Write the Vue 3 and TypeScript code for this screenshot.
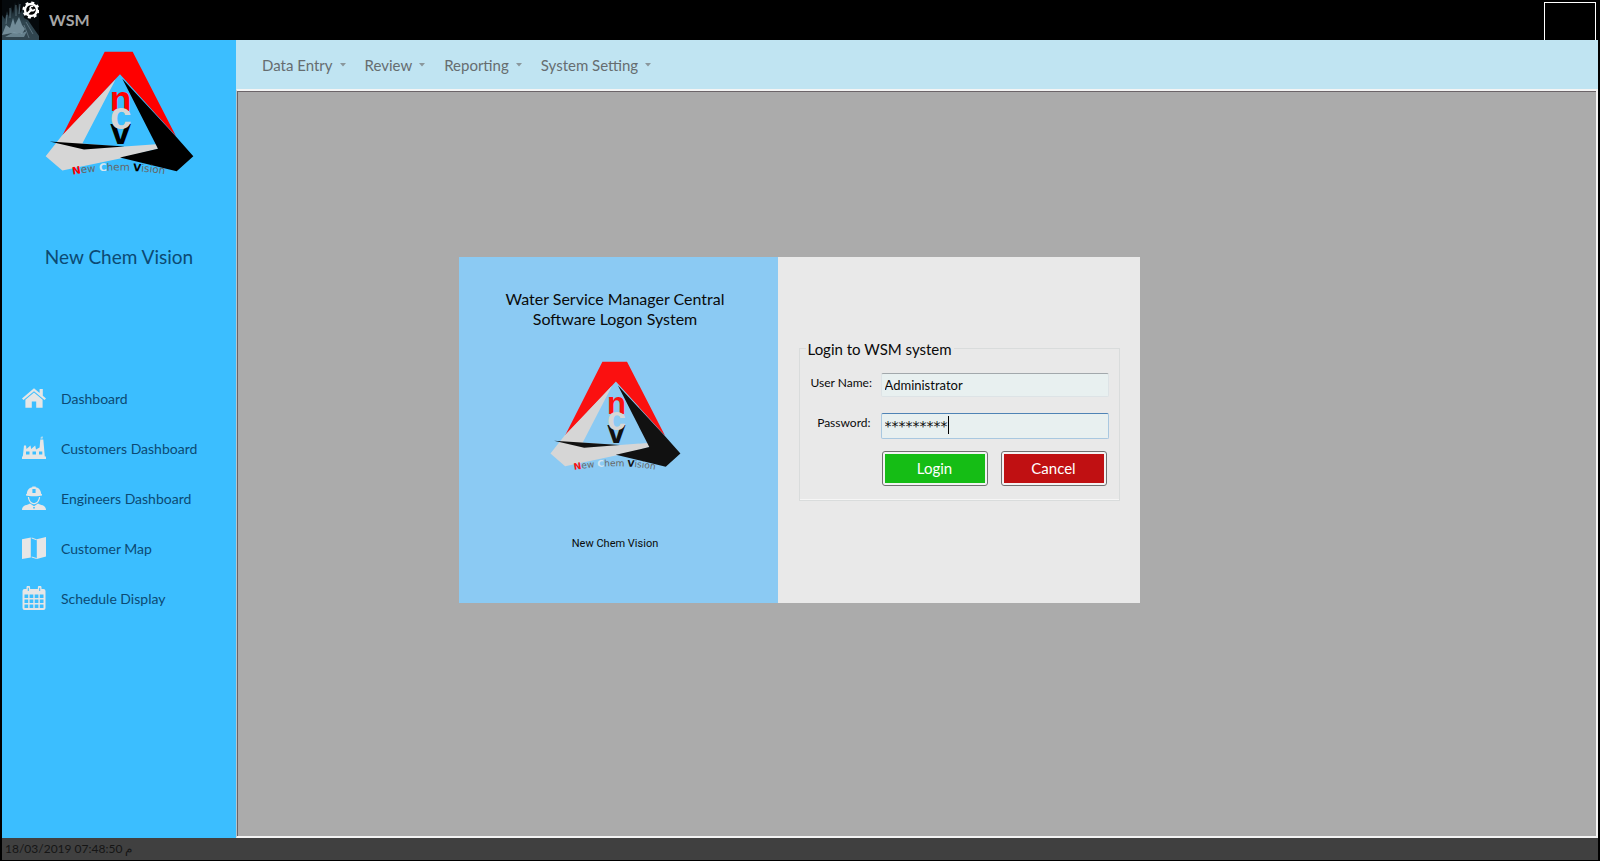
<script setup lang="ts">
import { defineComponent, h, ref } from 'vue'

const menus: string[] = ['Data Entry', 'Review', 'Reporting', 'System Setting']

interface NavItem {
  label: string
  icon: string
}

const nav: NavItem[] = [
  {
    label: 'Dashboard',
    icon: 'M12 2.2 L0 12.4 L1.5 14 L12 5.2 L22.500 14 L24 12.400 L20.800 9.700 V3 H17.600 V7 Z M12 6.600 L3.400 13.800 V21.800 H9.800 V15.500 H14.200 V21.800 H20.600 V13.800 Z'
  },
  {
    label: 'Customers Dashboard',
    icon: 'M0 23 V20.500 H0.800 L2 9.500 H4 L4.500 13 L8.500 9.500 L9.200 13 L13.200 9.500 L14 13.500 L17.600 11.500 L18.300 3.500 H21.300 L22.800 20.500 H24 V23 Z M4 15.500 V18.500 H7.500 V15.500 Z M10.500 15.500 V18.500 H14 V15.500 Z M17 15.500 V18.500 H20.300 V15.500 Z M18.600 2.500 V1.500 H19.600 V0.500 H20.600 V2.500 Z'
  },
  {
    label: 'Engineers Dashboard',
    icon: 'M4.800 8 C5 3.500 8 1.400 10.300 1.200 V0.400 H13.700 V1.200 C16 1.400 19 3.500 19.200 8 L20 8.300 V9.600 C17.500 10.600 6.500 10.600 4 9.600 V8.300 Z M10.400 3 V7 H13.600 V3 Z M5.800 11 C6.500 16 9.200 18.300 12 18.300 C14.800 18.300 17.500 16 18.200 11 L17 11 C16.500 14.800 14.500 17 12 17 C9.500 17 7.500 14.800 7 11 Z M8 17.500 L12 20.300 L16 17.500 C18 19.200 24 18.600 24 24 H0 C0 18.600 6 19.200 8 17.500 Z M11.200 21 V22.600 H12.800 V21 Z'
  },
  {
    label: 'Customer Map',
    icon: 'M0 3.200 L8.800 1.500 V21.500 L0 23 Z M9.600 1.500 L14.600 3.200 V4.200 L9.600 2.500 Z M9.600 20.500 L14.600 22 V23 L9.600 21.600 Z M14.800 3.200 L24 1 V20.500 L14.800 23 Z'
  },
  {
    label: 'Schedule Display',
    icon: 'M2.500 3 H4.500 V1.500 A1.800 1.800 0 0 1 8.100 1.500 V3 H15.900 V1.500 A1.800 1.800 0 0 1 19.500 1.500 V3 H21.500 A2 2 0 0 1 23.500 5 V22 A2 2 0 0 1 21.500 24 H2.500 A2 2 0 0 1 0.500 22 V5 A2 2 0 0 1 2.500 3 Z M2.500 8.500 V12 H6.200 V8.500 Z M7.600 8.500 V12 H11.300 V8.500 Z M12.700 8.500 V12 H16.400 V8.500 Z M17.800 8.500 V12 H21.500 V8.500 Z M2.500 13.400 V17 H6.200 V13.400 Z M7.600 13.400 V17 H11.300 V13.400 Z M12.700 13.400 V17 H16.400 V13.400 Z M17.800 13.400 V17 H21.500 V13.400 Z M2.500 18.400 V22 H6.200 V18.400 Z M7.600 18.400 V22 H11.300 V18.400 Z M12.700 18.400 V22 H16.400 V18.400 Z M17.800 18.400 V22 H21.500 V18.400 Z M5.800 1.800 V5 H6.800 V1.800 Z M17.200 1.800 V5 H18.200 V1.800 Z'
  }
]

const userName = ref('Administrator')
const password = ref('*********')

/* Company emblem: three folded bars around the stacked n-c-v monogram. */
const Emblem = defineComponent({
  props: { ink: { type: String, default: '#000000' }, red: { type: String, default: '#ff0000' } },
  setup(props) {
    const mono = (ch: string, y: number, size: number, fill: string) =>
      h('text', { x: 360, y, 'font-size': size, fill, 'text-anchor': 'middle', 'font-weight': 700, 'font-family': '"Liberation Sans", Arial, sans-serif' }, ch)
    const part = (t: string, fill: string, weight = 400) => h('tspan', { fill, 'font-weight': weight }, t)
    return () =>
      h('svg', { viewBox: '130 150 450 380', role: 'img', 'aria-label': 'New Chem Vision' }, [
        h('path', { d: 'M312 155 H396 L526 408 L358 222 L184 408 Z', fill: props.red }),
        h('path', { d: 'M345 237 L184 406 L135 468 L185 511 L362 474 L472 446 L467 432 L360 440 L245 430 Z', fill: '#d6d6d6' }),
        h('path', { d: 'M365 236 L525 408 L578 468 L528 513 L358 472 L472 446 Z', fill: props.ink }),
        h('path', { d: 'M147 424 L372 439 L250 448 Z', fill: props.ink }),
        mono('v', 433, 112, props.ink),
        mono('n', 333, 106, props.red),
        mono('c', 388, 116, '#d6d6d6'),
        h('path', { id: 'emblem-arc', d: 'M216 524 Q356 498 506 525', fill: 'none' }),
        h('text', { 'font-size': 31, 'font-family': '"DejaVu Sans", sans-serif' }, [
          h('textPath', { href: '#emblem-arc' }, [
            part('N', props.red, 700), part('ew ', '#666666'),
            part('C', '#d6e6f0', 700), part('hem ', '#666666'),
            part('V', props.ink, 700), part('ision', '#666666')
          ])
        ])
      ])
  }
})
</script>

<template>
  <div class="window">
    <header class="titlebar">
      <svg class="app-icon" viewBox="0 0 37 40" aria-hidden="true">
        <defs>
          <linearGradient id="spray" x1="0" y1="0" x2="0" y2="1">
            <stop offset="0" stop-color="#0c1419" />
            <stop offset="0.550" stop-color="#2f454f" />
            <stop offset="1" stop-color="#31454f" />
          </linearGradient>
        </defs>
        <rect width="37" height="40" fill="#05090c" />
        <path d="M0 40 V15 L3 19 L5 11 L7 17 L9 6 L11 14 L13 2 L15 10 L17 1 L18 13 L21 9 L22 18 L26 20 L30 26 L37 36 V40 Z" fill="url(#spray)" />
        <path d="M0 35 L4 25 L8 28 L11 18 L13 25 L17 17 L20 25 L23 29 L20 34 L10 33 Z" fill="#8fabb8" opacity="0.700" />
        <path d="M3 37 L12 32 L18 34 L25 31 L22 37 Z" fill="#7f9daa" opacity="0.700" />
        <path d="M8 8 V18 M14 5 V16 M18 4 L17 14 M5 15 L4 24 M24 22 L31 34 M22 25 L27 38" stroke="#6b8490" stroke-width="0.700" fill="none" />
        <circle cx="29" cy="10" r="6" fill="#000" stroke="#fff" stroke-width="2.400" />
        <circle cx="29" cy="10" r="7.500" fill="none" stroke="#fff" stroke-width="2.200" stroke-dasharray="3 2.890" />
        <path d="M25.500 13.500 L29.500 9.500" stroke="#fff" stroke-width="2.200" stroke-linecap="round" />
        <path d="M31.300 6.400 A2.300 2.300 0 1 0 32.600 9" stroke="#fff" stroke-width="1.600" fill="none" />
      </svg>
      <h1>WSM</h1>
      <div class="window-box"></div>
    </header>

    <div class="body">
      <aside class="sidebar">
        <Emblem class="side-logo" />
        <h2>New Chem Vision</h2>
        <nav aria-label="Main">
          <a v-for="item in nav" :key="item.label" href="#">
            <svg viewBox="0 0 24 24" aria-hidden="true"><path :d="item.icon" fill-rule="evenodd" /></svg>
            {{ item.label }}
          </a>
        </nav>
      </aside>

      <div class="workspace">
        <nav class="menubar" aria-label="Menu">
          <button v-for="m in menus" :key="m" type="button">
            {{ m }}<svg viewBox="0 0 6 4" aria-hidden="true"><path d="M0 0 H6 L3 3.500 Z" /></svg>
          </button>
        </nav>
        <main class="canvas"></main>
      </div>
    </div>

    <footer class="statusbar">18/03/2019 07:48:50 م</footer>

    <div class="overlay">
      <section class="dialog" role="dialog" aria-label="Login to WSM system">
        <div class="intro">
          <p class="product">Water Service Manager Central<br />Software Logon System</p>
          <Emblem class="dialog-logo" ink="#111111" red="#fb1010" />
          <p class="vendor">New Chem Vision</p>
        </div>
        <form class="login" @submit.prevent>
          <fieldset>
            <legend>Login to WSM system</legend>
            <label for="user">User Name:</label>
            <input id="user" v-model="userName" type="text" />
            <label for="pass">Password:</label>
            <div class="secret">
              <input id="pass" v-model="password" type="text" autocomplete="off" />
              <span class="caret"></span>
            </div>
            <div class="actions">
              <button class="ok" type="submit"><span>Login</span></button>
              <button class="cancel" type="button"><span>Cancel</span></button>
            </div>
          </fieldset>
        </form>
      </section>
    </div>
  </div>
</template>

<style>
body {
  margin: 0;
  background: #000;
}
</style>

<style scoped>
* {
  box-sizing: border-box;
}
.window {
  min-height: 100vh;
  display: flex;
  flex-direction: column;
  padding: 0 2px 1px;
  background: #000;
  font-family: "Comic Sans MS", Lato, sans-serif;
  font-size: 15px;
}
h1, h2, p {
  margin: 0;
  font-weight: 400;
}
.titlebar {
  height: 40px;
  display: flex;
  align-items: center;
  gap: 10px;
}
.app-icon {
  width: 37px;
  height: 40px;
}
h1 {
  font: 700 16px/20px Lato, sans-serif;
  color: #a6a6a6;
}
.window-box {
  width: 52px;
  height: 38px;
  margin-left: auto;
  margin-right: 2px;
  align-self: flex-end;
  border: 1px solid #fff;
  border-bottom: 0;
}
.body {
  flex: 1;
  display: flex;
}
.sidebar {
  width: 234px;
  flex: none;
  display: flex;
  flex-direction: column;
  align-items: center;
  padding-top: 10px;
  background: #3bbeff;
  color: #0c4a73;
}
.side-logo {
  width: 150px;
  height: 127px;
}
h2 {
  margin-top: 68px;
  font-size: 19px;
  line-height: 24px;
}
.sidebar nav {
  align-self: stretch;
  margin-top: 104px;
}
.sidebar a {
  display: flex;
  align-items: center;
  gap: 15px;
  height: 50px;
  padding-left: 20px;
  color: inherit;
  font-size: 14px;
  text-decoration: none;
}
.sidebar a svg {
  width: 24px;
  height: 24px;
  fill: #e6e6e6;
}
.workspace {
  flex: 1;
  display: flex;
  flex-direction: column;
}
.menubar {
  height: 49px;
  display: flex;
  align-items: center;
  gap: 19px;
  padding-left: 26px;
  background: #c0e4f2;
}
.menubar button {
  display: flex;
  align-items: center;
  gap: 7px;
  padding: 0;
  border: 0;
  background: none;
  font: inherit;
  color: #666d70;
}
.menubar svg {
  width: 6px;
  height: 4px;
  fill: #8a979c;
}
.canvas {
  flex: 1;
  border: 2px solid #f4f4f4;
  border-left: 1px solid #b5c4cc;
  background: #ababab;
  box-shadow: inset 1px 1px 0 #6b6468;
}
.statusbar {
  height: 22px;
  padding-left: 3px;
  font-size: 12px;
  line-height: 22px;
  color: #151515;
  background: #404040;
}
.overlay {
  position: fixed;
  inset: 0;
  display: grid;
  place-items: center;
  padding: 0 2px 2px 0;
}
.dialog {
  width: 681px;
  max-width: 100%;
  display: flex;
  background: #e9e9e9;
  color: #0a0a0a;
}
.intro {
  width: 319px;
  display: flex;
  flex-direction: column;
  align-items: center;
  padding: 32px 6px 51px 0;
  background: #8bcaf3;
}
.product {
  font-size: 16px;
  line-height: 20px;
  text-align: center;
}
.dialog-logo {
  width: 132px;
  height: 112px;
  margin-top: 31px;
}
.vendor {
  margin-top: 64px;
  font: 11px/16px Roboto, Tahoma, sans-serif;
}
.login {
  flex: 1;
  padding: 82px 20px 0 21px;
}
fieldset {
  display: grid;
  grid-template-columns: 60px 1fr;
  column-gap: 10px;
  margin: 0;
  padding: 14px 10px 14px 11px;
  border: 1px solid #d9dcdc;
  box-shadow: inset 0 -1px 0 #f6f6f6;
}
legend {
  margin-left: -5px;
  padding: 0 2px;
  font-size: 15px;
  line-height: 20px;
}
label {
  font-size: 12px;
  line-height: 20px;
  text-align: right;
  white-space: nowrap;
}
input {
  width: 100%;
  height: 24px;
  padding: 0 3px;
  border: 1px solid #dde3e6;
  border-top-color: #a2a8ac;
  border-radius: 2px;
  outline: 0;
  background: #e8f0f0;
  color: #0a0a0a;
  font-family: inherit;
  font-size: 13px;
}
#user {
  margin-bottom: 16px;
}
#pass {
  height: 26px;
  border-color: #a9c8e0;
  border-top-color: #4f83b5;
  font-family: "DejaVu Sans", sans-serif;
  font-size: 14px;
}
.secret {
  position: relative;
  height: 38px;
}
.caret {
  position: absolute;
  left: 67px;
  top: 3px;
  width: 1px;
  height: 18px;
  background: #000;
}
.actions {
  grid-column: 2;
  display: flex;
  gap: 13px;
  padding: 0 2px 0 1px;
}
.actions button {
  flex: 1;
  height: 35px;
  padding: 2px;
  border: 1px solid #707070;
  border-radius: 3px;
  background: #f3f3f3;
  color: #fff;
  font-family: inherit;
  font-size: 15px;
}
.actions span {
  display: grid;
  place-items: center;
  height: 100%;
}
.ok span {
  background: #15bd15;
}
.cancel span {
  background: #c01012;
}
</style>
